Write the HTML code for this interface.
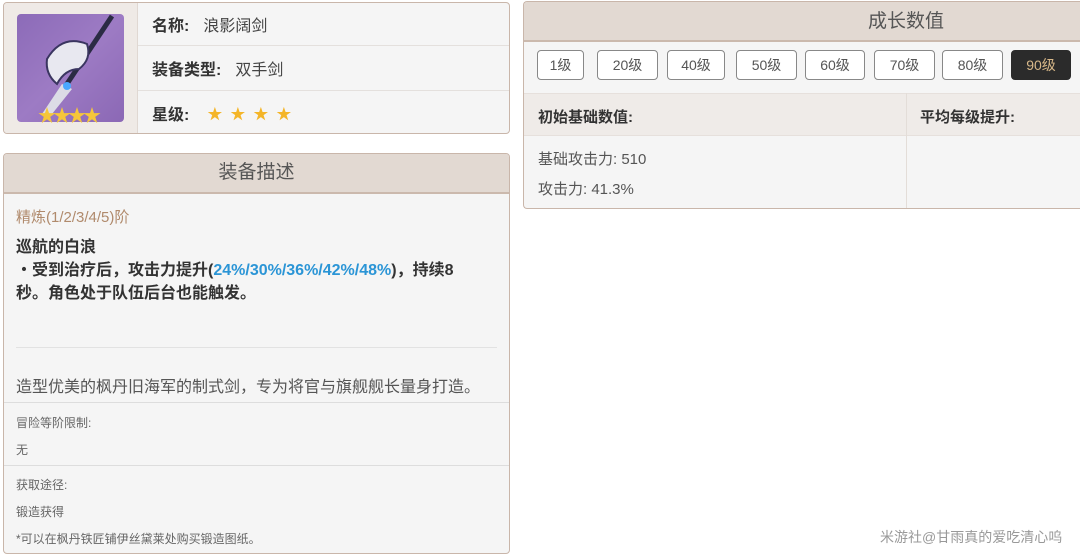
<!DOCTYPE html>
<html><head><meta charset="utf-8"><style>
*{box-sizing:border-box;margin:0;padding:0}
body{width:1080px;height:556px;background:#fff;font-family:"Liberation Sans","Noto Sans CJK SC",sans-serif;position:relative;overflow:hidden;color:#333}
.abs{position:absolute}
.card{position:absolute;border:1px solid #c9b6aa;border-radius:4px;background:#f5f5f5;overflow:hidden}
.hdr{position:absolute;left:0;right:0;top:0;background:#e2d9d2;border-bottom:2px solid #cbb9ad;text-align:center;color:#555;font-size:19px}
.row{position:absolute;left:134px;right:0;border-bottom:1px solid #e4e0dd;font-size:16px;padding-left:14px;display:flex;align-items:center}
.row b{color:#333;margin-right:14px}
.star{color:#f4b528;font-size:15px;margin-right:8px}
.btn{position:absolute;top:50px;height:30px;border:1px solid #888;border-radius:4px;background:#fff;font-size:14px;color:#555;display:flex;align-items:center;justify-content:center}
.sm{position:absolute;left:15px;font-size:12px;color:#666}
</style></head><body>
<div class="card" style="left:3px;top:2px;width:507px;height:132px">
 <div class="abs" style="left:0;top:0;width:134px;height:132px;background:#efeae6;border-right:1px solid #e0d8d2"></div>
 <div class="abs" style="left:13px;top:11px;width:107px;height:108px;border-radius:4px;background:linear-gradient(135deg,#8c6bb8,#9d7bc4 50%,#8b68b5)">
  <svg width="107" height="108" viewBox="0 0 107 108">
   <line x1="95" y1="2" x2="30" y2="100" stroke="#2b2b44" stroke-width="5"/>
   <path d="M30 45 Q45 20 70 30 Q75 45 62 55 Q48 55 40 70 Q28 60 30 45Z" fill="#e8e8f0" stroke="#3a3560" stroke-width="2"/>
   <path d="M45 70 L25 100 L35 100 L55 75Z" fill="#dcdce6"/>
   <circle cx="50" cy="72" r="4" fill="#4aa8ff"/>
  </svg>
  <div class="abs" style="left:21px;top:88px;color:#f6c63a;font-size:18px;letter-spacing:-3px">★★★★</div>
 </div>
 <div class="row" style="top:0;height:43px"><b>名称:</b><span style="color:#444">浪影阔剑</span></div>
 <div class="row" style="top:43px;height:45px"><b>装备类型:</b><span style="color:#444">双手剑</span></div>
 <div class="row" style="top:88px;height:44px;border:none"><b style="margin-right:18px">星级:</b><span class="star">★</span><span class="star">★</span><span class="star">★</span><span class="star">★</span></div>
</div>

<div class="card" style="left:3px;top:153px;width:507px;height:401px">
 <div class="hdr" style="height:40px;line-height:38px">装备描述</div>
 <div class="abs" style="left:12px;top:52px;font-size:15px;color:#b08a6c">精炼(1/2/3/4/5)阶</div>
 <div class="abs" style="left:12px;top:82px;font-size:16px;font-weight:bold;line-height:23px;color:#333;width:490px">巡航的白浪<br>・受到治疗后，攻击力提升(<span style="color:#2b95d6">24%/30%/36%/42%/48%</span>)，持续8<br>秒。角色处于队伍后台也能触发。</div>
 <div class="abs" style="left:12px;top:193px;width:481px;border-top:1px solid #e2e2e2"></div>
 <div class="abs" style="left:12px;top:219px;font-size:16px;color:#555">造型优美的枫丹旧海军的制式剑，专为将官与旗舰舰长量身打造。</div>
 <div class="abs" style="left:0;right:0;top:248px;border-top:1px solid #ddd"></div>
 <div class="sm" style="top:260px;left:12px">冒险等阶限制:</div>
 <div class="sm" style="top:287px;left:12px">无</div>
 <div class="abs" style="left:0;right:0;top:311px;border-top:1px solid #ddd"></div>
 <div class="sm" style="top:322px;left:12px">获取途径:</div>
 <div class="sm" style="top:349px;left:12px">锻造获得</div>
 <div class="sm" style="top:376px;left:12px">*可以在枫丹铁匠铺伊丝黛莱处购买锻造图纸。</div>
</div>

<div class="card" style="left:523px;top:1px;width:765px;height:208px;border-right:none">
 <div class="hdr" style="height:40px;line-height:40px">成长数值</div>
 <div class="abs" style="left:0;right:0;top:91px;height:43px;background:#efebe8;border-top:1px solid #e6e0dc;border-bottom:1px solid #e6e0dc"></div>
 <div class="abs" style="left:382px;top:91px;bottom:0;border-left:1px solid #e3ddd8"></div>
 <div class="abs" style="left:14px;top:104px;font-size:15px;font-weight:bold">初始基础数值:</div>
 <div class="abs" style="left:396px;top:104px;font-size:15px;font-weight:bold">平均每级提升:</div>
 <div class="abs" style="left:14px;top:146px;font-size:15px;color:#555">基础攻击力: 510</div>
 <div class="abs" style="left:14px;top:176px;font-size:15px;color:#555">攻击力: 41.3%</div>
</div>
<div class="btn" style="left:537px;width:47px">1级</div>
<div class="btn" style="left:597px;width:61px">20级</div>
<div class="btn" style="left:667px;width:58px">40级</div>
<div class="btn" style="left:736px;width:61px">50级</div>
<div class="btn" style="left:805px;width:60px">60级</div>
<div class="btn" style="left:874px;width:61px">70级</div>
<div class="btn" style="left:942px;width:61px">80级</div>
<div class="btn" style="left:1011px;width:60px;background:#2b2b2b;border-color:#2b2b2b;color:#d9b98a">90级</div>
<div class="abs" style="left:880px;top:527px;font-size:14px;color:#999">米游社@甘雨真的爱吃清心呜</div>
</body></html>
